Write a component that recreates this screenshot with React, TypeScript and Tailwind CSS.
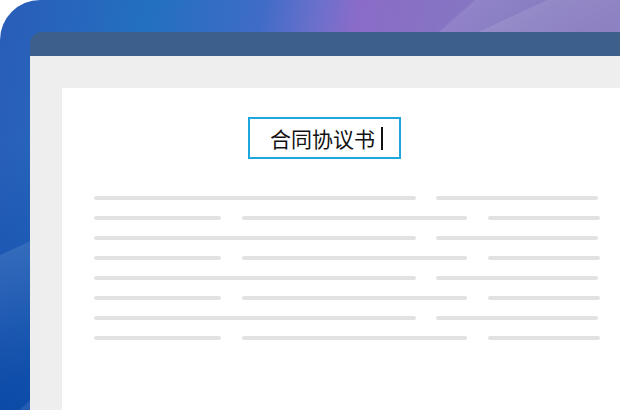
const rowsA = [322, 162];
const rowsB = [127, 225, 112];

function Bar({ w }: { w: number }) {
  return <div className="h-[4px] rounded-full bg-[#e2e2e2]" style={{ width: w }} />;
}

export default function App() {
  const rows = [0, 1, 2, 3, 4, 5, 6, 7];
  return (
    <div className="w-[620px] h-[410px] overflow-hidden bg-white font-['Noto_Sans_CJK_SC',sans-serif]">
      <div className="relative h-full rounded-tl-[40px] overflow-hidden bg-[linear-gradient(to_bottom,rgba(10,60,160,0)_35%,rgba(8,70,165,0.85)_100%),linear-gradient(100deg,#2a5cb8_0%,#2370c0_22%,#3f6cc6_38%,#6a70cc_46%,#8a6cc8_52%,#8478c0_72%,#8a7cc0_100%)] pl-[30px] pt-[32px]">
        {/* light streaks */}
        <div className="absolute inset-0 bg-[linear-gradient(155deg,transparent_0%,transparent_36.4%,rgba(255,255,255,0.1)_36.6%,rgba(255,255,255,0.03)_48%,transparent_55%)]" />
        <div className="absolute inset-0 bg-[linear-gradient(138deg,transparent_0%,transparent_44%,rgba(255,255,255,0.1)_44.3%,rgba(255,255,255,0.02)_52%,transparent_58%)]" />
        <div className="relative flex h-full flex-col">
          <div className="h-[24px] rounded-tl-[12px] bg-[#3c5f8c]" />
          <div className="flex flex-1 flex-col bg-[#eeeeee] pl-[32px] pt-[32px]">
            <div className="flex-1 bg-white pt-[29px]">
              <div className="ml-[186px] flex h-[42px] w-[153px] items-center border-2 border-[#1ea7dc] pl-[20px]">
                <span className="text-[21px] leading-none text-[#111]">合同协议书</span>
                <span className="ml-[6px] h-[23px] w-[2px] bg-[#111]" />
              </div>
              <div className="mt-[37px] flex flex-col gap-[16px] pl-[32px]">
                {rows.map((r) =>
                  r % 2 === 0 ? (
                    <div key={r} className="flex gap-[20px]">
                      {rowsA.map((w, i) => (
                        <Bar key={i} w={w} />
                      ))}
                    </div>
                  ) : (
                    <div key={r} className="flex gap-[21px]">
                      {rowsB.map((w, i) => (
                        <Bar key={i} w={w} />
                      ))}
                    </div>
                  )
                )}
              </div>
            </div>
          </div>
        </div>
      </div>
    </div>
  );
}
